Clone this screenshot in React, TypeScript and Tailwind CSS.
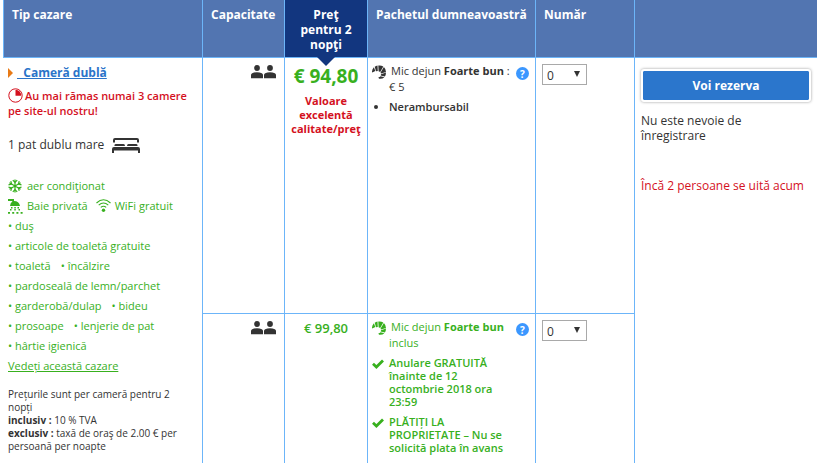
import type { ReactNode } from 'react';

interface IconProps {
    className?: string;
}

const PersonIcon = () => (
    <svg viewBox="0 0 12 14" className="h-[14px] w-[12px]" fill="currentColor" aria-hidden>
        <circle cx="6" cy="3" r="2.9" />
        <path d="M0 13.200V10Q0 8.900 1.200 8.300 3.300 7.200 6 7.200T10.800 8.300Q12 8.900 12 10V13.200z" />
    </svg>
);

const TimerIcon = () => (
    <svg viewBox="0 0 15 15" className="mr-0.5 inline-block size-[15px] align-top" aria-hidden>
        <circle cx="7.5" cy="7.5" r="6.7" fill="none" stroke="currentColor" strokeWidth="1" />
        <path d="M7.5 1.8v5.900h5.800A5.800 5.800 0 0 0 7.500 1.800z" fill="currentColor" />
    </svg>
);

const BedIcon = () => (
    <svg viewBox="0 0 28 16" className="h-[16px] w-[28px]" fill="currentColor" aria-hidden>
        <path d="M1 5.500V3Q1 1 3 1H25Q27 1 27 3V5.500H25V3H3V5.500z" />
        <path d="M2.500 9V8Q2.500 7 4 7H11.500Q13 7 13 9zM15 9Q15 7 16.500 7H24Q25.500 7 25.500 8V9z" />
        <path d="M0 16V12Q0 10 2 10H26Q28 10 28 12V16H26V13.500H2V16z" />
    </svg>
);

const SnowflakeIcon = () => (
    <svg viewBox="0 0 14 14" className="size-[14px]" fill="none" stroke="currentColor" strokeWidth="1.2" aria-hidden>
        <path d="M7 .5v13M1.400 3.750l11.200 6.500M1.400 10.250l11.200-6.500" />
        <path d="M4.800 1.200L7 3.400l2.200-2.200M4.800 12.800L7 10.600l2.200 2.200M.5 5.900l3.100-.8-.8-3M13.500 8.100l-3.100.8.8 3M.5 8.100l3.100.8-.8 3M13.500 5.900l-3.100-.8.8-3" />
    </svg>
);

const ShowerIcon = () => (
    <svg viewBox="0 0 15 15" className="h-[15px] w-[15px]" fill="currentColor" aria-hidden>
        <path d="M0 0H6V2Q11 2 12 7H2Q2.300 4 4.300 2.600V2H0z" />
        <path d="M3 8h1.500v1.500H3zM6.300 8h1.500v1.500H6.300zM9.500 8H11v1.500H9.500zM2 10h1.500v1.500H2zM6.300 10h1.500v1.500H6.300zM10.500 10H12v1.500h-1.500zM0 13h2v1.800H0zM4.200 13h2v1.800h-2zM8.400 13h2v1.800h-2zM12.600 13h2v1.800h-2z" />
    </svg>
);

const WifiIcon = () => (
    <svg viewBox="0 0 15 14" className="h-[14px] w-[15px]" fill="none" stroke="currentColor" strokeWidth="1.1" aria-hidden>
        <path d="M.5 4Q7.500-2.500 14.500 4M2.700 6.200Q7.500 1.800 12.300 6.200M4.800 8.400Q7.500 6 10.200 8.400" />
        <circle cx="7.5" cy="11.2" r="1.7" fill="currentColor" stroke="none" />
    </svg>
);

const CroissantIcon = () => (
    <svg viewBox="0 0 14 14" className="size-[14px]" fill="currentColor" aria-hidden>
        <path d="M0 7.500Q-.2 4.500 1.900 2.300L3.300 6 1.300 7zM2.700 1.800Q4 .8 5.500.6L5.800 6 4 6.200zM6.300.5Q9 .1 11.300 1.400L8.200 7 6.600 6.200zM11.900 1.900Q13.800 3.700 14 6.900L9 8.600 8.600 7.500zM14 7.600Q14 9.800 12.900 11.600L8.700 10.600 9 9.300zM12.400 12.200Q10.200 14.200 7 13.700L6.400 12.300Q7.800 12.300 8.500 11.300z" />
    </svg>
);

const CheckIcon = ({ className = '' }: IconProps) => (
    <svg viewBox="0 0 12 10" className={`h-[10px] w-[12px] ${className}`} fill="none" stroke="currentColor" strokeWidth="2.8" aria-hidden>
        <path d="M1 4.800l3.400 3.200L11 1.600" />
    </svg>
);

const facilityRows = [
    ['duş'],
    ['articole de toaletă gratuite'],
    ['toaletă', 'încălzire'],
    ['pardoseală de lemn/parchet'],
    ['garderobă/dulap', 'bideu'],
    ['prosoape', 'lenjerie de pat'],
    ['hârtie igienică'],
];

const Guests = () => (
    <div role="img" aria-label="2 persoane" className="flex justify-end gap-px">
        <PersonIcon />
        <PersonIcon />
    </div>
);

const HelpButton = () => (
    <button
        type="button"
        aria-label="Detalii mic dejun"
        className="mt-1 flex size-[13px] shrink-0 items-center justify-center rounded-full bg-[#3b97ff] text-[10px] leading-none font-bold text-white"
    >
        ?
    </button>
);

const RoomCount = ({ label }: { label: string }) => (
    <div className="relative w-[45px]">
        <select
            aria-label={label}
            defaultValue="0"
            className="h-[21px] w-full appearance-none border border-[#a9a9a9] bg-white pt-0.5 pl-1 text-[12px] leading-[17px] text-[#333]"
        >
            <option>0</option>
            <option>1</option>
            <option>2</option>
            <option>3</option>
        </select>
        <svg viewBox="0 0 6 6" className="pointer-events-none absolute top-[7px] right-[7px] size-[6px]" fill="#333" aria-hidden>
            <path d="M0 0h6L3 6z" />
        </svg>
    </div>
);

const Meal = ({ suffix, children }: { suffix?: string; children: ReactNode }) => (
    <div className="flex items-start">
        <span className="mt-0.5 w-[17px] shrink-0">
            <CroissantIcon />
        </span>
        <p className="flex-1 leading-4">
            <span className="pl-0.5">Mic dejun </span>
            <strong>Foarte bun</strong>
            {suffix}
            <br />
            {children}
        </p>
        <HelpButton />
    </div>
);

const headCell = 'border-r border-b border-[#6cb5f9] px-2 pt-[7px] pb-[5px] align-top font-bold';
const bodyCell = 'border-r border-[#6cb5f9] align-top';

export default function App() {
    return (
        <main className="bg-white pl-[3px] font-['Open_Sans','Noto_Sans',sans-serif] text-[#333]">
            <table className="w-full table-fixed border-separate border-spacing-0 text-[11px]">
                <colgroup>
                    <col className="w-[200px]" />
                    <col className="w-[82px]" />
                    <col className="w-[83px]" />
                    <col className="w-[168px]" />
                    <col className="w-[99px]" />
                    <col />
                </colgroup>
                <thead className="bg-[#5275b1] text-left text-[12px] leading-[15px] text-white">
                    <tr>
                        <th scope="col" className={`${headCell} border-l`}>Tip cazare</th>
                        <th scope="col" className={headCell}>Capacitate</th>
                        <th scope="col" className={`${headCell} relative bg-[#12367f] text-center`}>
                            Preţ pentru 2 nopţi
                            <svg viewBox="0 0 18 9" className="absolute top-full left-1/2 h-[9px] w-[18px] -translate-x-1/2" fill="#12367f" aria-hidden>
                                <path d="M0 0h18L9 9z" />
                            </svg>
                        </th>
                        <th scope="col" className={`${headCell} whitespace-nowrap`}>Pachetul dumneavoastră</th>
                        <th scope="col" className={headCell}>Număr</th>
                        <th scope="col" aria-label="Rezervare" className="border-b border-[#6cb5f9]" />
                    </tr>
                </thead>
                <tbody>
                    <tr>
                        <td rowSpan={2} className={`${bodyCell} px-[5px] pt-1.5 pb-[10px]`}>
                            <div className="flex h-[18px] items-center">
                                <svg viewBox="0 0 5 10" className="mr-1 h-[10px] w-[5px]" fill="#e87a16" aria-hidden>
                                    <path d="M0 0l5 5-5 5z" />
                                </svg>
                                <a href="#camera" className="text-[12px] leading-[18px] font-bold whitespace-pre text-[#2b74c9] underline">  Cameră dublă</a>
                            </div>
                            <p className="mt-1.5 leading-[15px] font-semibold text-[#d4111e]">
                                <TimerIcon />
                                Au mai rămas numai 3 camere
                                <br />
                                pe site-ul nostru!
                            </p>
                            <p className="mt-[18px] flex items-center gap-2 text-[12px] leading-[18px]">
                                1 pat dublu mare
                                <BedIcon />
                            </p>
                            <div className="mt-[22px] leading-5 text-[#38b01e]">
                                <p className="flex items-center gap-[5px]">
                                    <SnowflakeIcon />
                                    aer condiţionat
                                </p>
                                <p className="flex items-center gap-1">
                                    <ShowerIcon />
                                    Baie privată
                                    <span className="ml-1"><WifiIcon /></span>
                                    WiFi gratuit
                                </p>
                                {facilityRows.map((row) => (
                                    <ul key={row[0]} className="flex gap-2.5">
                                        {row.map((item) => (
                                            <li key={item}>• {item}</li>
                                        ))}
                                    </ul>
                                ))}
                                <a href="#cazare" className="underline">Vedeți această cazare</a>
                            </div>
                            <p className="mt-3 pr-2 text-[10px] leading-[13px]">
                                Prețurile sunt per cameră pentru 2 nopți
                                <br />
                                <strong>inclusiv :</strong> 10 % TVA
                                <br />
                                <strong>exclusiv :</strong> taxă de oraş de 2.00 € per persoană per noapte
                            </p>
                        </td>
                        <td className={`${bodyCell} h-[256px] border-b px-2 pt-[7px]`}>
                            <Guests />
                        </td>
                        <td className={`${bodyCell} border-b px-1 pt-[5px] text-center`}>
                            <p className="text-[19px] leading-[26px] font-bold whitespace-nowrap text-[#38b01e]">€ 94,80</p>
                            <p className="mt-[5px] leading-[14px] font-bold text-[#d4111e]">Valoare excelentă calitate/preţ</p>
                        </td>
                        <td className={`${bodyCell} border-b pt-[5px] pr-1.5 pl-1`}>
                            <Meal suffix=" :">€ 5</Meal>
                            <ul className="mt-[5px] list-disc pl-[17px] leading-[14px] font-semibold">
                                <li>Nerambursabil</li>
                            </ul>
                        </td>
                        <td className={`${bodyCell} border-b px-1.5 pt-1.5`}>
                            <RoomCount label="Număr camere, € 94,80" />
                        </td>
                        <td rowSpan={2} className="px-1.5 pt-[11px] align-top text-[12px] leading-[15px]">
                            <button
                                type="button"
                                className="h-[33px] w-full rounded-[3px] border-2 border-white bg-[#2b76cc] bg-clip-padding text-[12px] font-bold text-white shadow-[0_0_3px_rgba(0,0,0,0.4)]"
                            >
                                Voi rezerva
                            </button>
                            <p className="mt-[11px] pr-10">Nu este nevoie de înregistrare</p>
                            <p className="mt-[35px] whitespace-nowrap text-[#d4111e]">Încă 2 persoane se uită acum</p>
                        </td>
                    </tr>
                    <tr>
                        <td className={`${bodyCell} px-2 pt-[7px]`}>
                            <Guests />
                        </td>
                        <td className={`${bodyCell} px-1 pt-[5px] text-center`}>
                            <p className="text-[13px] leading-[18px] font-semibold text-[#38b01e]">€ 99,80</p>
                        </td>
                        <td className={`${bodyCell} pt-[5px] pr-1.5 pl-1 text-[#38b01e]`}>
                            <Meal>inclus</Meal>
                            <ul className="mt-[5px] space-y-[7px] leading-[13px] font-semibold">
                                <li className="flex">
                                    <CheckIcon className="mt-[3px] mr-[5px] shrink-0" />
                                    <span className="pr-6">Anulare GRATUITĂ înainte de 12 octombrie 2018 ora 23:59</span>
                                </li>
                                <li className="flex">
                                    <CheckIcon className="mt-[3px] mr-[5px] shrink-0" />
                                    <span className="pr-4">PLĂTIȚI LA PROPRIETATE – Nu se solicită plata în avans</span>
                                </li>
                            </ul>
                        </td>
                        <td className={`${bodyCell} px-1.5 pt-1.5`}>
                            <RoomCount label="Număr camere, € 99,80" />
                        </td>
                    </tr>
                </tbody>
            </table>
        </main>
    );
}
